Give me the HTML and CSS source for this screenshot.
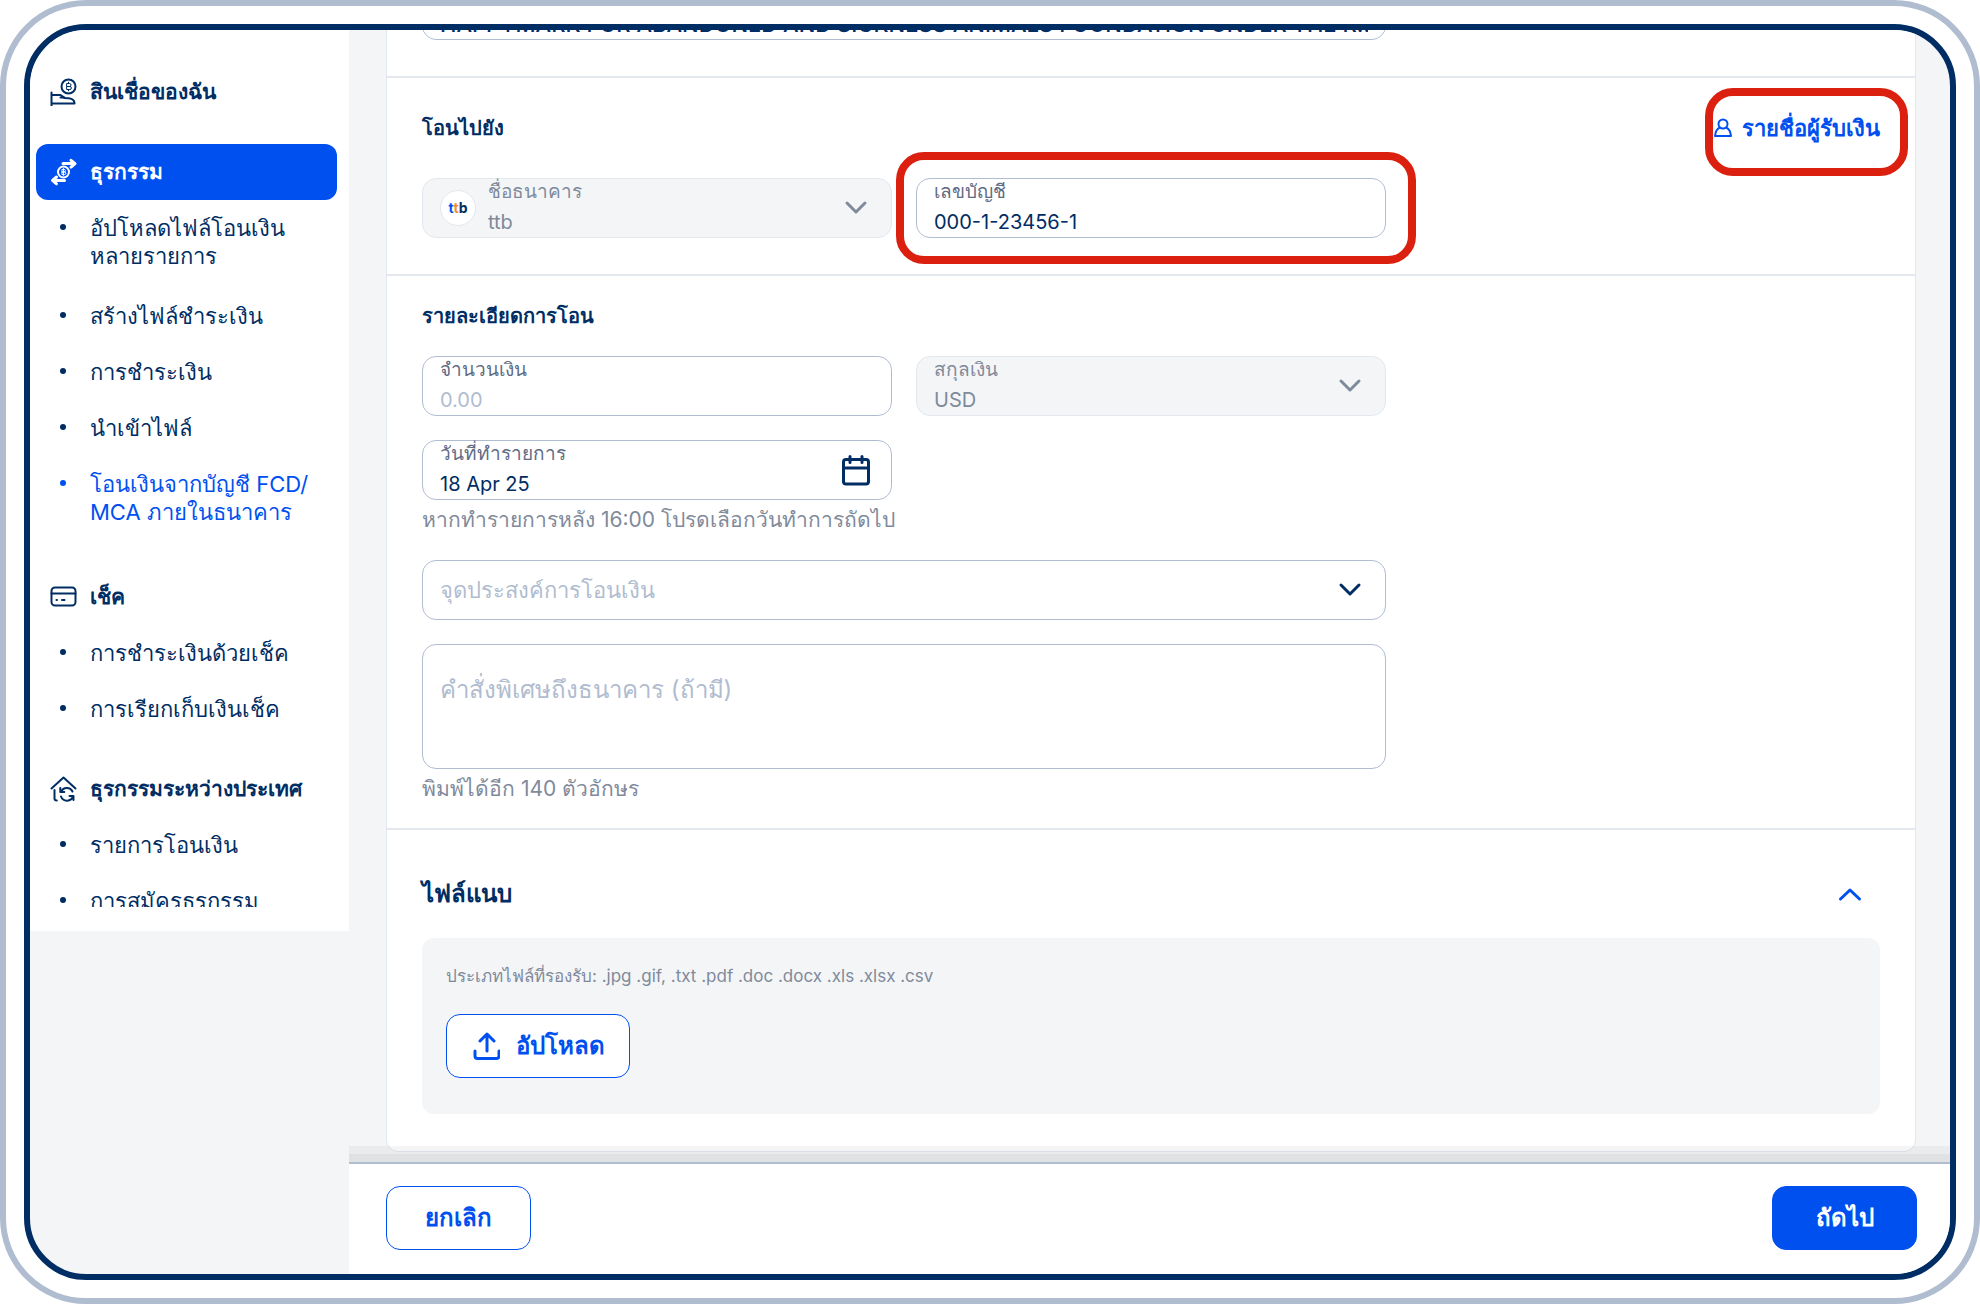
FILE: index.html
```html
<!DOCTYPE html>
<html lang="th">
<head>
<meta charset="utf-8">
<meta name="viewport" content="width=device-width, initial-scale=1">
<title>โอนเงินจากบัญชี FCD/MCA</title>
<link rel="stylesheet" href="styles.css">
</head>
<body>
<div class="frame">
  <div class="app">
    <nav class="sidebar">
      <a class="group" href="#">
        <svg class="icon" viewBox="0 0 28 28"><circle cx="18.500" cy="8.500" r="7"/><path class="thin" d="M17 5.500h2.500a1.400 1.400 0 0 1 0 3H17zM17 8.500h2.900a1.400 1.400 0 0 1 0 3H17zM18.500 4.200v1.300M18.500 11.500v1.300"/><path d="M1.500 14.500v13M1.500 17h9l4 2.500h-4M14 20c7 0 10.500 1 10.500 5.500h-23"/></svg>
        <span>สินเชื่อของฉัน</span>
      </a>
      <a class="group active" href="#">
        <svg class="icon" viewBox="0 0 28 28"><circle cx="13.500" cy="14" r="5.500"/><path class="thin" d="M12.300 11.500h1.900a1.200 1.200 0 0 1 0 2.500h-1.900zM12.300 14h2.300a1.200 1.200 0 0 1 0 2.500h-2.300zM13.500 10.500v7"/><path class="bold" d="M13 5.500h11.500M21 2.300l4 3.400-4 3.400M14.500 22.500H3M6.500 19l-4 3.400 4 3.400"/></svg>
        <span>ธุรกรรม</span>
      </a>
      <ul class="links">
        <li><a href="#">อัปโหลดไฟล์โอนเงิน<br>หลายรายการ</a></li>
      </ul>
      <ul class="links spaced">
        <li><a href="#">สร้างไฟล์ชำระเงิน</a></li>
        <li><a href="#">การชำระเงิน</a></li>
        <li><a href="#">นำเข้าไฟล์</a></li>
        <li class="current"><a href="#">โอนเงินจากบัญชี FCD/<br>MCA ภายในธนาคาร</a></li>
      </ul>
      <a class="group" href="#">
        <svg class="icon" viewBox="0 0 28 28"><rect x="1.500" y="4.500" width="24" height="18" rx="3.500"/><path d="M1.500 10.500h24M6.500 17h.500M12 17h2.500"/></svg>
        <span>เช็ค</span>
      </a>
      <ul class="links">
        <li><a href="#">การชำระเงินด้วยเช็ค</a></li>
        <li><a href="#">การเรียกเก็บเงินเช็ค</a></li>
      </ul>
      <a class="group" href="#">
        <svg class="icon" viewBox="0 0 28 28"><path d="M1.500 13.500L13.500 2.500l12 11M4.500 15v8.500c0 1.500.8 2 2.300 2M11 17a6.300 6.300 0 0 1 11.500-.5M23 21a6.300 6.300 0 0 1-12 .5M10.300 13v4h4M23.500 25v-4h-4"/></svg>
        <span>ธุรกรรมระหว่างประเทศ</span>
      </a>
      <ul class="links">
        <li><a href="#">รายการโอนเงิน</a></li>
        <li><a href="#">การสมัครธุรกรรม</a></li>
      </ul>
    </nav>

    <div class="page">
      <main class="scroll">
        <form class="card" id="transfer">
          <section class="section">
            <div class="field wide owner">
              <label for="from-name">ชื่อบัญชี</label>
              <input id="from-name" type="text" readonly value="HAPPYMARK FOR ABANDONED AND SICKNESS ANIMALS FOUNDATION UNDER THE R...">
            </div>
          </section>

          <section class="section payee">
            <div class="section-head">
              <h2>โอนไปยัง</h2>
              <div class="marked">
                <a class="payee-link" href="#">
                  <svg class="person" viewBox="0 0 20 20"><circle cx="10" cy="6" r="4.500"/><path d="M7 9.500C4 10.500 2.500 13 2 18h16c-.500-5-2-7.500-5-8.500"/></svg>
                  <span>รายชื่อผู้รับเงิน</span>
                </a>
                <span class="marker"></span>
              </div>
            </div>
            <div class="row">
              <div class="field disabled with-logo">
                <span class="logo"><b class="t1">t</b><b class="t2">t</b><b class="t3">b</b></span>
                <label for="bank">ชื่อธนาคาร</label>
                <select id="bank" disabled><option>ttb</option></select>
                <svg class="chevron" viewBox="0 0 24 24"><path d="M3 7l9 9 9-9"/></svg>
              </div>
              <div class="marked">
                <div class="field">
                  <label for="account">เลขบัญชี</label>
                  <input id="account" type="text" value="000-1-23456-1">
                </div>
                <span class="marker"></span>
              </div>
            </div>
          </section>

          <section class="section details">
            <div class="section-head"><h2>รายละเอียดการโอน</h2></div>
            <div class="row">
              <div class="field">
                <label for="amount">จำนวนเงิน</label>
                <input id="amount" type="text" placeholder="0.00">
              </div>
              <div class="field disabled">
                <label for="currency">สกุลเงิน</label>
                <select id="currency" disabled><option>USD</option></select>
                <svg class="chevron" viewBox="0 0 24 24"><path d="M3 7l9 9 9-9"/></svg>
              </div>
            </div>
            <div class="row">
              <div class="field">
                <label for="date">วันที่ทำรายการ</label>
                <input id="date" type="text" value="18 Apr 25">
                <svg class="calendar" viewBox="0 0 30 32"><rect x="2.500" y="5.500" width="25" height="24.500" rx="2.500"/><path d="M2.500 14h25M9 2.500v6M21 2.500v6"/></svg>
              </div>
            </div>
            <p class="hint">หากทำรายการหลัง 16:00 โปรดเลือกวันทำการถัดไป</p>
            <div class="field wide single">
              <select id="purpose" aria-label="จุดประสงค์การโอนเงิน"><option>จุดประสงค์การโอนเงิน</option></select>
              <svg class="chevron" viewBox="0 0 24 24"><path d="M3 7l9 9 9-9"/></svg>
            </div>
            <textarea class="note" aria-label="คำสั่งพิเศษถึงธนาคาร" placeholder="คำสั่งพิเศษถึงธนาคาร (ถ้ามี)"></textarea>
            <p class="hint">พิมพ์ได้อีก 140 ตัวอักษร</p>
          </section>

          <section class="section files">
            <div class="section-head">
              <h3>ไฟล์แนบ</h3>
              <button class="toggle" type="button" aria-label="ย่อ"><svg class="chevron" viewBox="0 0 24 24"><path d="M2.500 17l9.500-9 9.500 9"/></svg></button>
            </div>
            <div class="dropzone">
              <p>ประเภทไฟล์ที่รองรับ: .jpg .gif, .txt .pdf .doc .docx .xls .xlsx .csv</p>
              <button class="btn upload" type="button">
                <svg class="icon" viewBox="0 0 28 28"><path class="bold" d="M15 19V2M8 9l7-7 7 7M3 19v5c0 1.700.8 2.500 2.500 2.500h19c1.700 0 2.500-.8 2.500-2.500v-5"/></svg>
                <span>อัปโหลด</span>
              </button>
            </div>
          </section>
        </form>
      </main>
      <footer class="actions">
        <button class="btn" type="button">ยกเลิก</button>
        <button class="btn primary" type="submit" form="transfer">ถัดไป</button>
      </footer>
    </div>
  </div>
</div>
</body>
</html>
```

FILE: styles.css
```css
:root {
  --navy: #002d63;
  --blue: #0050f0;
  --steel: #b0bccf;
  --line: #e2e8ee;
  --grey: #f4f5f7;
  --muted: #7f8a9b;
  --label: #5f6c84;
  --red: #dc2010;
}

* { box-sizing: border-box; }

body {
  margin: 0;
  background: #fff;
  color: var(--navy);
  font-family: "Inter", sans-serif;
  font-size: 22px;
  line-height: 28px;
}

h2, h3, p, ul { margin: 0; padding: 0; }
a { color: inherit; text-decoration: none; }
button, input, select, textarea { font: inherit; color: inherit; }

svg {
  display: block;
  flex: none;
  fill: none;
  stroke: currentColor;
  stroke-width: 2;
  stroke-linecap: round;
  stroke-linejoin: round;
}

.frame {
  height: 100vh;
  padding: 18px;
  border: 6px solid var(--steel);
  border-radius: 86px;
}

.app {
  display: flex;
  height: 100%;
  overflow: hidden;
  border: 6px solid var(--navy);
  border-radius: 62px;
  background: var(--grey);
}

/* Sidebar */
.sidebar {
  flex: none;
  width: 319px;
  height: 901px;
  padding: 34px 12px 0 6px;
  overflow: hidden;
  border-bottom: 24px solid #fff;
  background: #fff;
}

.group {
  display: flex;
  align-items: center;
  gap: 12px;
  height: 56px;
  padding-left: 14px;
  border-radius: 12px;
  font-size: 21px;
  font-weight: 700;
}

.group.active {
  margin-top: 24px;
  background: var(--blue);
  color: #fff;
}

.links + .group { margin-top: 24px; }

.icon {
  width: 28px;
  height: 28px;
}

.icon .thin { stroke-width: 1; }
.icon .bold { stroke-width: 3; }

.links { list-style: none; }
.links.spaced { margin: 4px 0 29px; }

.links li {
  display: flex;
  padding: 14px 0 14px 24px;
}

.links li::before {
  content: "";
  flex: none;
  width: 6px;
  height: 6px;
  margin: 10px 24px 0 0;
  border-radius: 50%;
  background: currentColor;
}

.links a { white-space: nowrap; }
.links .current { color: var(--blue); }

/* Page */
.page {
  display: flex;
  flex: 1;
  flex-direction: column;
  min-width: 0;
}

.scroll {
  display: flex;
  flex: 1;
  flex-direction: column;
  justify-content: flex-end;
  min-height: 0;
  padding: 0 34px 10px 37px;
  overflow: hidden;
}

.card {
  flex: none;
  border: 1px solid var(--line);
  border-radius: 12px;
  background: #fff;
}

.section { padding: 36px 35px; }
.section + .section { border-top: 2px solid var(--line); }
.section.payee { padding-top: 34px; }
.section.details { padding: 24px 35px 23px; }
.section.files { padding: 48px 35px 37px; }

.section-head {
  display: flex;
  align-items: center;
  justify-content: space-between;
  height: 32px;
}

h2 {
  font-size: 20px;
  font-weight: 700;
}

h3 {
  font-size: 24px;
  font-weight: 700;
}

.payee .row { margin-top: 34px; }
.details .row { margin-top: 24px; }

.row {
  display: grid;
  grid-template-columns: 1fr 1fr;
  gap: 24px;
  max-width: 964px;
}

.field {
  display: flex;
  position: relative;
  flex-direction: column;
  height: 60px;
  border: 1px solid var(--steel);
  border-radius: 14px;
  background: #fff;
}

.field.wide { max-width: 964px; }

.field label {
  height: 28px;
  padding-left: 17px;
  color: var(--label);
  font-size: 19px;
  line-height: 26px;
}

.field input,
.field select {
  width: 100%;
  height: 30px;
  padding: 0 17px;
  border: 0;
  outline: 0;
  appearance: none;
  background: none;
  font-size: 20px;
  opacity: 1;
}

.field.owner input {
  font-size: 22px;
  font-weight: 500;
}

.field.single select {
  height: 58px;
  color: var(--steel);
  font-size: 22px;
}

.field.disabled {
  border-color: var(--line);
  background: var(--grey);
}

.field.disabled,
.field.disabled label,
.field.disabled select { color: var(--muted); }

.field.with-logo label,
.field.with-logo select { padding-left: 65px; }

::placeholder { color: var(--steel); opacity: 1; }

.logo {
  display: flex;
  position: absolute;
  top: 11px;
  left: 17px;
  align-items: center;
  justify-content: center;
  width: 36px;
  height: 36px;
  border: 1px solid var(--line);
  border-radius: 50%;
  background: #fff;
  font-size: 14px;
}

.t1 { color: var(--blue); }
.t2 { color: #f68b1f; }
.t3 { color: var(--navy); }

.field .chevron,
.calendar {
  position: absolute;
  top: 17px;
  right: 23px;
  pointer-events: none;
}

.chevron {
  width: 24px;
  height: 24px;
  stroke-width: 3;
}

.calendar {
  top: 13px;
  right: 20px;
  width: 30px;
  height: 32px;
  stroke-width: 3;
}

.hint {
  margin-top: 4px;
  color: var(--muted);
  font-size: 21px;
  line-height: 32px;
}

.single { margin-top: 24px; }

.note {
  display: block;
  width: 100%;
  max-width: 964px;
  height: 125px;
  margin-top: 24px;
  padding: 31px 17px;
  border: 1px solid var(--steel);
  border-radius: 14px;
  outline: 0;
  font-size: 24px;
  resize: none;
}

/* Callout rings */
.marked { position: relative; }

.marker {
  position: absolute;
  inset: -26px -30px -26px -20px;
  border: 8px solid var(--red);
  border-radius: 28px;
  pointer-events: none;
}

.section-head .marker { inset: -24px -28px -32px -8px; }

.payee-link {
  display: flex;
  align-items: center;
  gap: 9px;
  height: 32px;
  color: var(--blue);
  font-size: 22px;
  font-weight: 700;
}

.person {
  width: 20px;
  height: 20px;
}

/* Attachments */
.toggle {
  margin-right: 18px;
  padding: 0;
  border: 0;
  background: none;
  color: var(--blue);
}

.dropzone {
  margin-top: 28px;
  padding: 24px 24px 36px;
  border-radius: 12px;
  background: var(--grey);
}

.dropzone p {
  color: var(--muted);
  font-size: 17px;
}

.btn {
  display: flex;
  align-items: center;
  justify-content: center;
  gap: 16px;
  min-width: 145px;
  height: 64px;
  border: 1px solid var(--blue);
  border-radius: 14px;
  background: #fff;
  color: var(--blue);
  font-size: 24px;
  font-weight: 700;
}

.btn.primary {
  background: var(--blue);
  color: #fff;
}

.upload {
  min-width: 184px;
  margin-top: 24px;
}

/* Footer */
.actions {
  display: flex;
  position: relative;
  justify-content: space-between;
  padding: 22px 33px 24px 37px;
  border-top: 2px solid var(--steel);
  background: #fff;
  box-shadow: 0 -8px 0 rgba(0, 0, 0, 0.04), 0 -16px 0 rgba(0, 0, 0, 0.04);
}
```
